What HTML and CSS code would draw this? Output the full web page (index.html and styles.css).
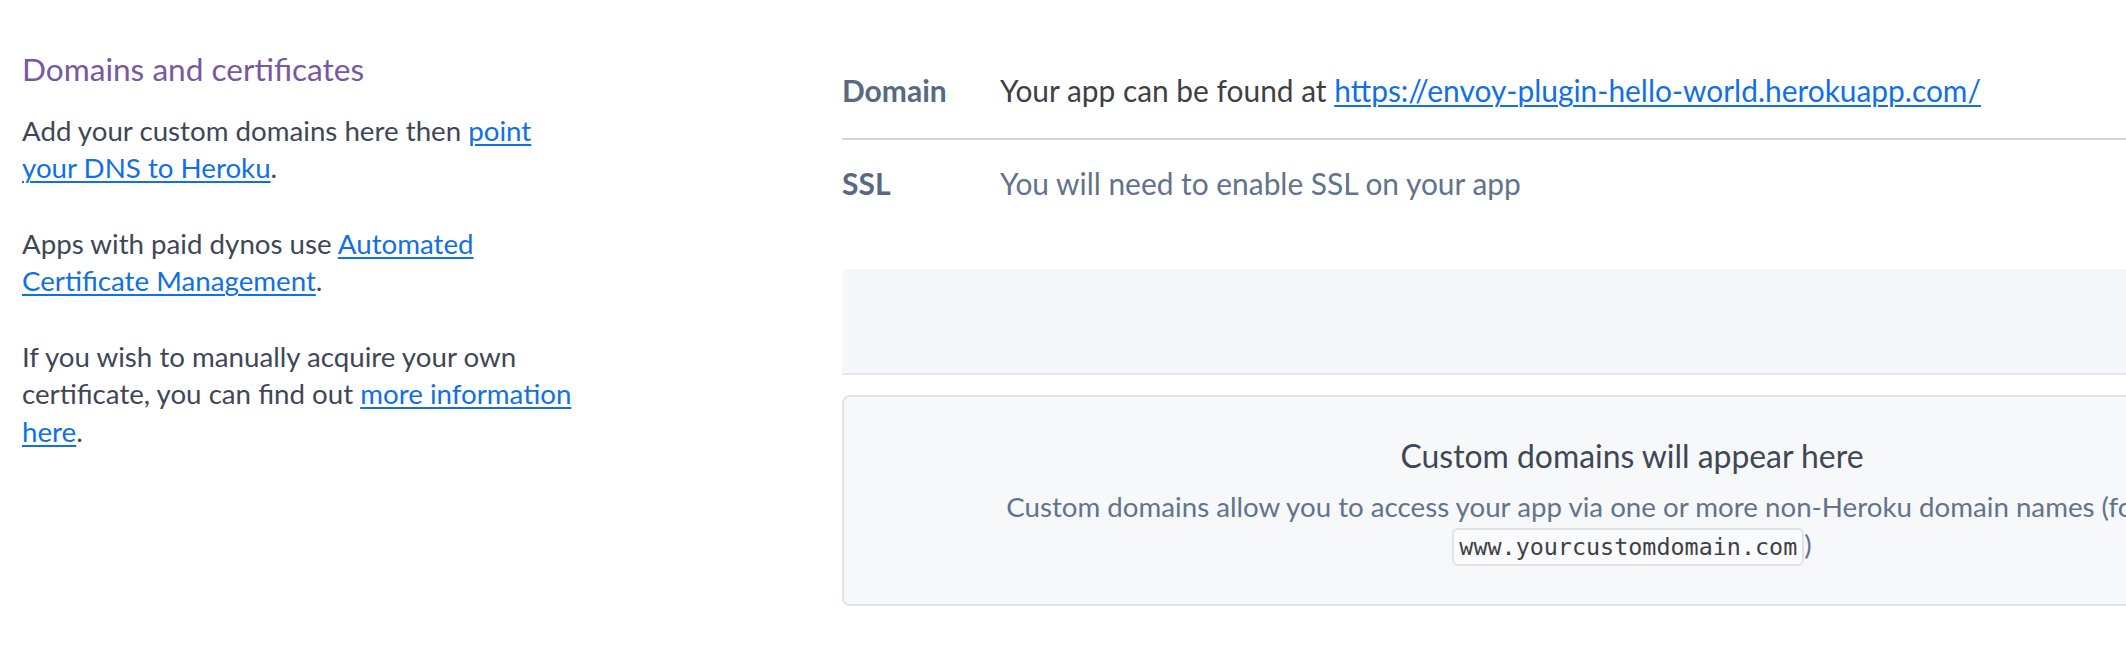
FILE: index.html
```html
<!DOCTYPE html>
<html lang="en">
<head>
<meta charset="utf-8">
<title>Domains and certificates</title>
<link rel="stylesheet" href="styles.css">
</head>
<body>
<div class="page">
  <section class="intro">
    <h3 class="intro-title">Domains and certificates</h3>
    <p>Add your custom domains here then <a href="#">point your DNS to Heroku</a>.</p>
    <p>Apps with paid dynos use <a href="#">Automated Certificate Management</a>.</p>
    <p>If you wish to manually acquire your own certificate, you can find out <a href="#">more information here</a>.</p>
  </section>
  <section class="main">
    <dl class="info">
      <div class="info-row">
        <dt class="info-label">Domain</dt>
        <dd class="info-value">Your app can be found at <a href="#">https://envoy-plugin-hello-world.herokuapp.com/</a></dd>
      </div>
      <div class="info-row">
        <dt class="info-label">SSL</dt>
        <dd class="info-value muted">You will need to enable SSL on your app</dd>
      </div>
    </dl>
    <div class="toolbar"></div>
    <div class="empty">
      <h4 class="empty-title">Custom domains will appear here</h4>
      <p class="empty-text">Custom domains allow you to access your app via one or more non-Heroku domain names (for example, <code class="code">www.yourcustomdomain.com</code>)</p>
    </div>
  </section>
</div>
</body>
</html>
```
FILE: styles.css
```css
* { box-sizing: border-box; }
html, body { margin: 0; padding: 0; background: #fff; overflow: hidden; }
body {
  font-family: Lato, "Noto Sans", sans-serif;
  font-size: 27.7px;
  line-height: 37.7px;
  color: #3f4757;
}
a {
  color: #1170e4;
  text-decoration: underline;
  text-underline-offset: 3px;
  text-decoration-thickness: 1.5px;
}

.page { display: flex; width: 2422px; padding-left: 22px; }

.intro { width: 820px; flex: none; padding-top: 51px; }
.intro-title {
  margin: 0 0 23px;
  font-size: 31.6px;
  line-height: 37.5px;
  font-weight: 400;
  color: #79589f;
}
.intro p { max-width: 558px; margin: 0 0 37.7px; }

.main { width: 1580px; flex: none; }

.info { margin: 0; padding-top: 47px; font-size: 29.9px; line-height: 37.5px; }
.info-row { display: flex; padding: 25px 0 28px; }
.info-row + .info-row { border-top: 2px solid #cfd7e6; }
.info-label { width: 158px; flex: none; font-weight: 700; font-size: 30px; color: #596981; }
.info-value { margin: 0; color: #3f3f44; }
.info-value.muted { color: #62738d; }

.toolbar {
  margin-top: 39px;
  height: 106px;
  background: #f6f7fb;
  border-bottom: 2px solid #e3e7ef;
  border-radius: 6px 6px 0 0;
}

.empty {
  margin-top: 20px;
  border: 2px solid #e1e3e7;
  border-radius: 8px;
  background: #f7f8fa;
  padding: 39px 40px 38px;
  text-align: center;
}
.empty-title {
  margin: 0 0 12px;
  font-size: 31.9px;
  line-height: 40px;
  font-weight: 400;
  color: #3f4757;
}
.empty-text { margin: 0; line-height: 37.5px; color: #62738d; }
.code {
  font-family: "DejaVu Sans Mono", monospace;
  font-size: 23.4px;
  color: #3f3f44;
  background: #fafbfc;
  border: 2px solid #dfe2e6;
  border-radius: 6px;
  padding: 3px 5px;
}
```
